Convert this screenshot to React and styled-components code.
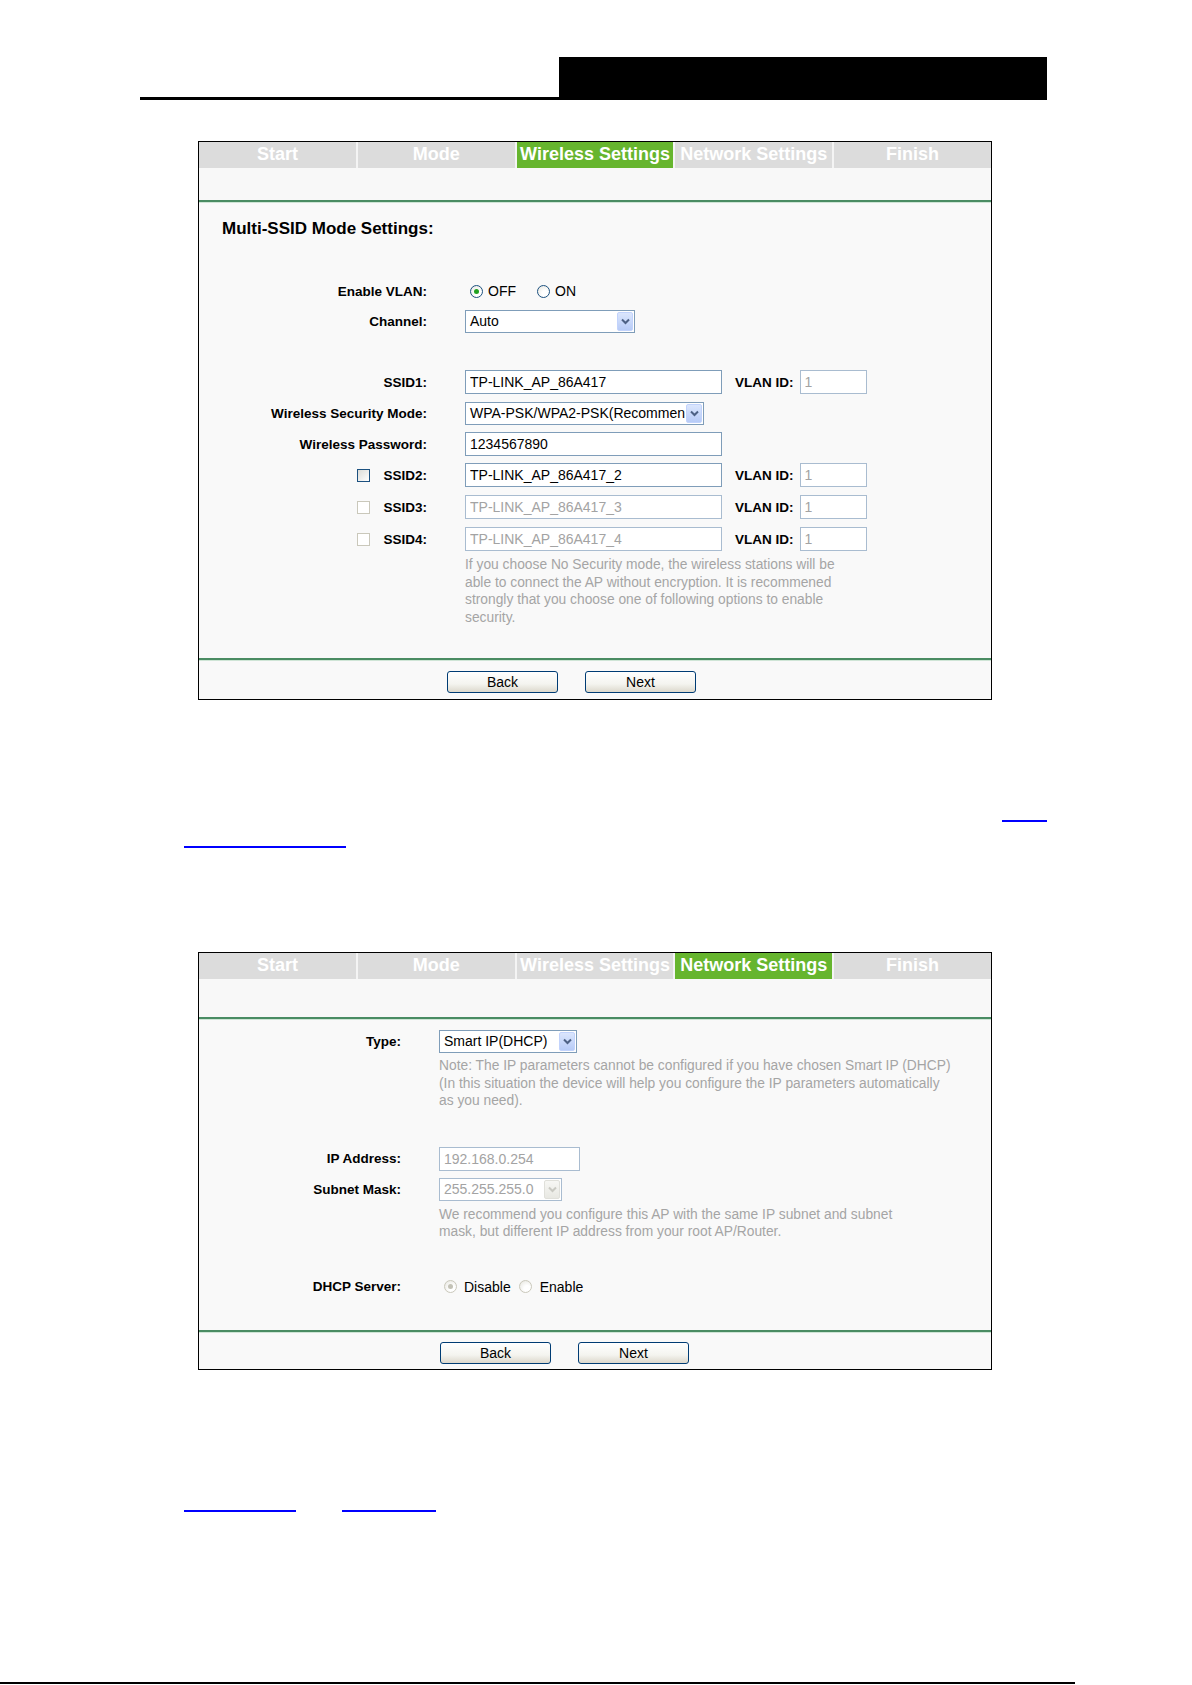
import React from 'react';
import styled, {createGlobalStyle} from 'styled-components';

const STEPS = ['Start', 'Mode', 'Wireless Settings', 'Network Settings', 'Finish'];

const COLORS = {
	tab: '#dcdcdc',
	tabActive: '#66b52e',
	panel: '#f9f9f9',
	divider: '#4a8c63',
	dividerLight: '#cfe5d6',
	inputBorder: '#7f9db9',
	inputBorderOff: '#a9bcd0',
	xpBlue: '#1c5180',
	off: '#cac8bb',
	note: '#a5a5a5',
	link: '#0000ff',
};

const GlobalStyle = createGlobalStyle`
	html, body {
		margin: 0;
		padding: 0;
		background: #fff;
	}

	body {
		font-family: 'Liberation Sans', Arial, sans-serif;
		color: #000;
	}
`;

const Page = styled.div`
	display: flex;
	flex-direction: column;
	width: 1192px;
	height: 1685px;
	padding-top: 57px;
	box-sizing: border-box;
	overflow: hidden;
`;

const Header = styled.header`
	display: flex;
	width: 907px;
	height: 43px;
	margin-left: 140px;
`;

const HeaderRule = styled.div`
	flex: 1;
	border-bottom: 3px solid #000;
`;

const HeaderBlock = styled.div`
	width: 488px;
	background: #000;
`;

const Panel = styled.section`
	width: 794px;
	margin: ${(p) => p.$top}px 0 0 198px;
	border: 1px solid #000;
	box-sizing: border-box;
	background: ${COLORS.panel};
`;

const TabBar = styled.nav`
	display: grid;
	grid-template-columns: repeat(5, 1fr);
	column-gap: 2px;
	height: 26px;
	background: #f4f4f4;
`;

const Tab = styled.div`
	overflow: hidden;
	background: ${(p) => (p.$active ? COLORS.tabActive : COLORS.tab)};
	color: #fff;
	font-size: 18px;
	font-weight: bold;
	line-height: 25px;
	text-align: center;
	white-space: nowrap;
`;

const TabSpacer = styled.div`
	height: ${(p) => p.$height}px;
	background: #f8f8f8;
`;

const Divider = styled.div`
	height: 2px;
	background: ${COLORS.divider};
	border-bottom: 1px solid ${COLORS.dividerLight};
`;

const Body = styled.div`
	padding-bottom: ${(p) => p.$bottom}px;
`;

const Heading = styled.h2`
	margin: 16px 0 0 23px;
	font-size: 17px;
	line-height: 20px;
	font-weight: bold;
`;

const Form = styled.div`
	margin-top: ${(p) => p.$top || 0}px;
`;

const Row = styled.div`
	display: flex;
	align-items: center;
	height: 24px;
	margin-top: ${(p) => p.$gap || 0}px;
`;

const Label = styled.div`
	display: flex;
	flex-shrink: 0;
	align-items: center;
	justify-content: flex-end;
	width: ${(p) => p.$width}px;
	font-size: 13.5px;
	font-weight: bold;
	white-space: nowrap;
`;

const Field = styled.div`
	display: flex;
	align-items: center;
	margin-left: 38px;
`;

const TextInput = styled.input`
	width: ${(p) => p.$width}px;
	height: 24px;
	margin: 0;
	padding: 0 4px;
	border: 1px solid ${(p) => (p.disabled ? COLORS.inputBorderOff : COLORS.inputBorder)};
	box-sizing: border-box;
	background: #fff;
	color: ${(p) => (p.disabled ? '#a3a3a3' : '#000')};
	font-family: 'Liberation Sans', Arial, sans-serif;
	font-size: 14px;
	outline: none;
	-webkit-text-fill-color: ${(p) => (p.disabled ? '#a3a3a3' : '#000')};
`;

const InlineLabel = styled.span`
	margin: 0 6px 0 13px;
	font-size: 13.5px;
	font-weight: bold;
	white-space: nowrap;
`;

const SelectBox = styled.div`
	display: flex;
	align-items: stretch;
	width: ${(p) => p.$width}px;
	height: 23px;
	border: 1px solid ${(p) => (p.$disabled ? COLORS.inputBorderOff : COLORS.inputBorder)};
	box-sizing: border-box;
	background: #fff;
`;

const SelectText = styled.span`
	flex: 1;
	overflow: hidden;
	padding-left: 4px;
	color: ${(p) => (p.$disabled ? '#a3a3a3' : '#000')};
	font-size: 14px;
	line-height: 21px;
	white-space: nowrap;
`;

const SelectArrow = styled.span`
	display: flex;
	align-items: center;
	justify-content: center;
	width: 16px;
	margin: 1px;
	border-radius: 2px;
	background: ${(p) => (p.$disabled
		? 'linear-gradient(#f7f7f4, #e8e8e2)'
		: 'linear-gradient(#dbe6fd, #b7cbf7)')};
	border: 1px solid ${(p) => (p.$disabled ? '#e0e0da' : '#c2d3fc')};
	box-sizing: border-box;
`;

const Select = ({width, value, disabled}) => (
	<SelectBox $width={width} $disabled={disabled}>
		<SelectText $disabled={disabled}>{value}</SelectText>
		<SelectArrow $disabled={disabled}>
			<svg width="9" height="7" viewBox="0 0 9 7">
				<path
					d="M1 1.5 L4.5 5 L8 1.5"
					fill="none"
					stroke={disabled ? '#c9c9c2' : '#4d6185'}
					strokeWidth="2"
				/>
			</svg>
		</SelectArrow>
	</SelectBox>
);

const RadioGroup = styled.div`
	display: flex;
	align-items: center;
	margin-left: 5px;
	gap: ${(p) => p.$gap}px;
	font-size: 14px;
`;

const RadioOption = styled.label`
	display: flex;
	align-items: center;
	gap: ${(p) => p.$gap}px;
`;

const RadioDot = styled.span`
	position: relative;
	display: inline-block;
	width: 13px;
	height: 13px;
	border: 1px solid ${(p) => (p.$disabled ? COLORS.off : COLORS.xpBlue)};
	border-radius: 50%;
	box-sizing: border-box;
	background: radial-gradient(circle at 65% 70%, #fff 30%, #e4e3dc);

	&::after {
		content: '';
		display: ${(p) => (p.$checked ? 'block' : 'none')};
		position: absolute;
		top: 3px;
		left: 3px;
		width: 5px;
		height: 5px;
		border-radius: 50%;
		background: ${(p) => (p.$disabled ? '#c3c2b6' : '#21a121')};
	}
`;

const CheckBox = styled.span`
	display: inline-block;
	width: 13px;
	height: 13px;
	margin-right: 13px;
	border: 1px solid ${(p) => (p.$disabled ? COLORS.off : COLORS.xpBlue)};
	box-sizing: border-box;
	background: ${(p) => (p.$disabled ? '#fff' : 'linear-gradient(135deg, #dcdcd7, #fff)')};
`;

const Note = styled.p`
	margin: ${(p) => p.$top}px 0 0 ${(p) => p.$left}px;
	color: ${COLORS.note};
	font-size: 13.8px;
	line-height: 17.5px;
	white-space: nowrap;
`;

const ButtonBar = styled.div`
	display: flex;
	gap: 27px;
	padding: ${(p) => p.$top}px 0 ${(p) => p.$bottom}px ${(p) => p.$offset}px;
`;

const WizardButton = styled.button`
	width: 111px;
	height: 22px;
	margin: 0;
	padding: 0;
	border: 1px solid #003c74;
	border-radius: 3px;
	background: linear-gradient(#fff, #f4f4ef 60%, #dcd8cc);
	color: #000;
	font-family: 'Liberation Sans', Arial, sans-serif;
	font-size: 14px;
`;

const LinkRow = styled.div`
	display: flex;
	justify-content: ${(p) => p.$justify || 'flex-start'};
	gap: 46px;
	width: 863px;
	margin: ${(p) => p.$top}px 0 0 184px;
`;

const LinkUnderline = styled.span`
	display: block;
	width: ${(p) => p.$width}px;
	height: 2px;
	background: ${COLORS.link};
`;

const FooterRule = styled.div`
	width: 1075px;
	height: 2px;
	margin-top: auto;
	margin-bottom: 1px;
	background: #000;
`;

const WizardPanel = ({active, top, spacer, buttons, children}) => (
	<Panel $top={top}>
		<TabBar>
			{STEPS.map((step) => (
				<Tab key={step} $active={step === active}>{step}</Tab>
			))}
		</TabBar>
		<TabSpacer $height={spacer} />
		<Divider />
		{children}
		<Divider />
		<ButtonBar $offset={buttons.offset} $top={buttons.top} $bottom={buttons.bottom}>
			<WizardButton type="button">Back</WizardButton>
			<WizardButton type="button">Next</WizardButton>
		</ButtonBar>
	</Panel>
);

const SSID_ROWS = [
	{id: 2, value: 'TP-LINK_AP_86A417_2', disabled: false},
	{id: 3, value: 'TP-LINK_AP_86A417_3', disabled: true},
	{id: 4, value: 'TP-LINK_AP_86A417_4', disabled: true},
];

const W1 = 228;
const W2 = 202;

const WirelessSettings = () => (
	<WizardPanel
		active="Wireless Settings"
		top={41}
		spacer={32}
		buttons={{offset: 248, top: 10, bottom: 6}}
	>
		<Body $bottom={32}>
			<Heading>Multi-SSID Mode Settings:</Heading>
			<Form $top={40}>
				<Row>
					<Label $width={W1}>Enable VLAN:</Label>
					<Field>
						<RadioGroup $gap={21}>
							<RadioOption $gap={5}><RadioDot $checked />OFF</RadioOption>
							<RadioOption $gap={5}><RadioDot />ON</RadioOption>
						</RadioGroup>
					</Field>
				</Row>
				<Row $gap={6}>
					<Label $width={W1}>Channel:</Label>
					<Field>
						<Select width={170} value="Auto" />
					</Field>
				</Row>
				<Row $gap={37}>
					<Label $width={W1}>SSID1:</Label>
					<Field>
						<TextInput $width={257} defaultValue="TP-LINK_AP_86A417" />
						<InlineLabel>VLAN ID:</InlineLabel>
						<TextInput $width={67} defaultValue="1" disabled />
					</Field>
				</Row>
				<Row $gap={7}>
					<Label $width={W1}>Wireless Security Mode:</Label>
					<Field>
						<Select width={239} value="WPA-PSK/WPA2-PSK(Recommended)" />
					</Field>
				</Row>
				<Row $gap={7}>
					<Label $width={W1}>Wireless Password:</Label>
					<Field>
						<TextInput $width={257} defaultValue="1234567890" />
					</Field>
				</Row>
				{SSID_ROWS.map((row) => (
					<Row key={row.id} $gap={row.id === 2 ? 7 : 8}>
						<Label $width={W1}>
							<CheckBox $disabled={row.disabled} />
							SSID{row.id}:
						</Label>
						<Field>
							<TextInput $width={257} defaultValue={row.value} disabled={row.disabled} />
							<InlineLabel>VLAN ID:</InlineLabel>
							<TextInput $width={67} defaultValue="1" disabled />
						</Field>
					</Row>
				))}
			</Form>
			<Note $top={5} $left={W1 + 38}>
				If you choose No Security mode, the wireless stations will be<br />
				able to connect the AP without encryption. It is recommened<br />
				strongly that you choose one of following options to enable<br />
				security.
			</Note>
		</Body>
	</WizardPanel>
);

const NetworkSettings = () => (
	<WizardPanel
		active="Network Settings"
		top={104}
		spacer={38}
		buttons={{offset: 241, top: 9, bottom: 5}}
	>
		<Body $bottom={31}>
			<Form $top={9}>
				<Row>
					<Label $width={W2}>Type:</Label>
					<Field>
						<Select width={138} value="Smart IP(DHCP)" />
					</Field>
				</Row>
			</Form>
			<Note $top={4} $left={W2 + 38}>
				Note: The IP parameters cannot be configured if you have chosen Smart IP (DHCP)<br />
				(In this situation the device will help you configure the IP parameters automatically<br />
				as you need).
			</Note>
			<Form $top={37}>
				<Row>
					<Label $width={W2}>IP Address:</Label>
					<Field>
						<TextInput $width={141} defaultValue="192.168.0.254" disabled />
					</Field>
				</Row>
				<Row $gap={7}>
					<Label $width={W2}>Subnet Mask:</Label>
					<Field>
						<Select width={123} value="255.255.255.0" disabled />
					</Field>
				</Row>
			</Form>
			<Note $top={4} $left={W2 + 38}>
				We recommend you configure this AP with the same IP subnet and subnet<br />
				mask, but different IP address from your root AP/Router.
			</Note>
			<Form $top={34}>
				<Row>
					<Label $width={W2}>DHCP Server:</Label>
					<Field>
						<RadioGroup $gap={8}>
							<RadioOption $gap={7}><RadioDot $checked $disabled />Disable</RadioOption>
							<RadioOption $gap={8}><RadioDot $disabled />Enable</RadioOption>
						</RadioGroup>
					</Field>
				</Row>
			</Form>
		</Body>
	</WizardPanel>
);

const App = () => (
	<>
		<GlobalStyle />
		<Page>
			<Header>
				<HeaderRule />
				<HeaderBlock />
			</Header>
			<WirelessSettings />
			<LinkRow $top={120} $justify="flex-end">
				<LinkUnderline $width={45} aria-hidden="true" />
			</LinkRow>
			<LinkRow $top={24}>
				<LinkUnderline $width={162} aria-hidden="true" />
			</LinkRow>
			<NetworkSettings />
			<LinkRow $top={140}>
				<LinkUnderline $width={112} aria-hidden="true" />
				<LinkUnderline $width={94} aria-hidden="true" />
			</LinkRow>
			<FooterRule />
		</Page>
	</>
);

export default App;
